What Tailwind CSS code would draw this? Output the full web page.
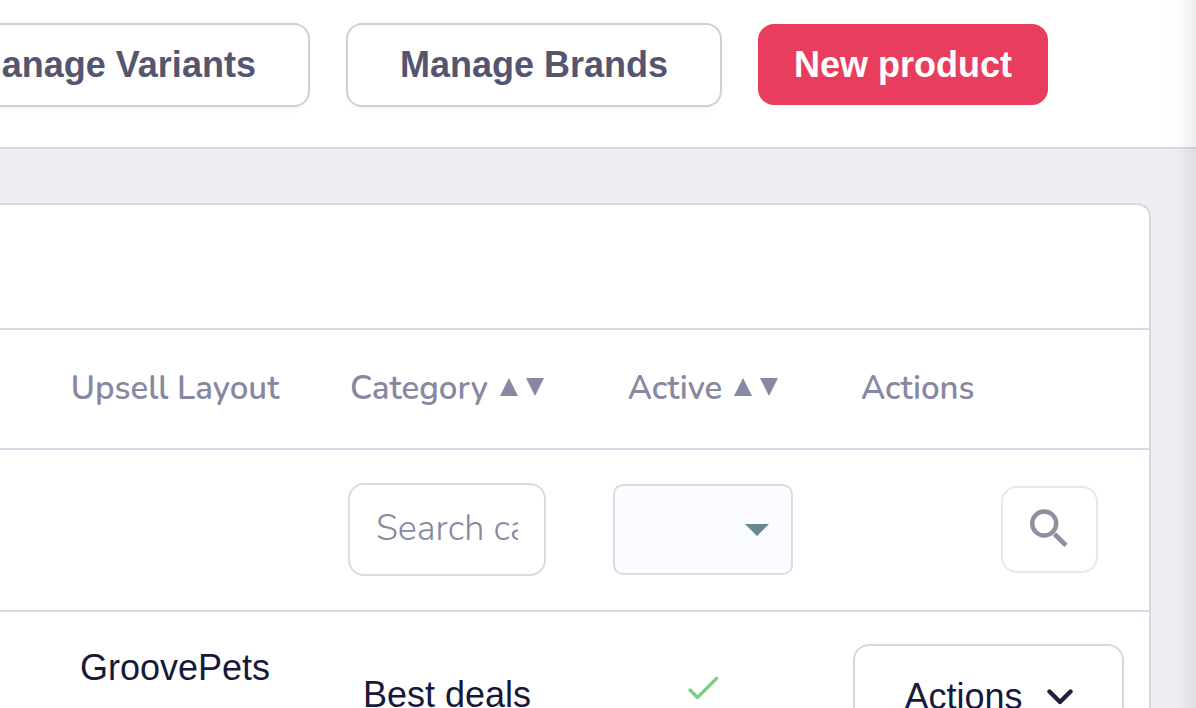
<!DOCTYPE html>
<html lang="en">
<head>
<meta charset="utf-8">
<title>Products</title>
<script src="https://cdn.jsdelivr.net/npm/@tailwindcss/browser@4"></script>
</head>
<body class="relative h-screen overflow-hidden bg-[#efeef5] font-['Liberation_Sans',Arial,sans-serif] text-[36px] leading-[40px] text-[#17193b]">
  <header class="flex items-start justify-end gap-9 overflow-hidden border-b-2 border-[#dadae2] bg-white pt-[23px] pr-[148px] pb-10 font-bold whitespace-nowrap text-[#555570]">
    <button type="button" class="h-[84px] shrink-0 rounded-2xl border-2 border-[#cfcfdb] bg-white px-[52px] shadow-md shadow-black/3">Manage Variants</button>
    <button type="button" class="h-[84px] shrink-0 rounded-2xl border-2 border-[#cfcfdb] bg-white px-[52px] shadow-md shadow-black/3">Manage Brands</button>
    <button type="button" class="mt-px h-[81px] shrink-0 rounded-2xl bg-[#e93d5d] px-9 text-white">New product</button>
  </header>

  <main class="pt-[54px] pr-[45px]">
    <section class="rounded-tr-[14px] border-t-2 border-r-2 border-[#d7d7e3] bg-white pt-[123px]">
      <table class="w-full table-fixed border-collapse">
        <colgroup>
          <col>
          <col class="w-[272px]">
          <col class="w-[240px]">
          <col class="w-[326px]">
        </colgroup>
        <thead class="font-['Nunito','Lato',sans-serif] text-[33px] whitespace-nowrap text-[#8788a2]">
          <tr class="h-[120px] border-y-2 border-[#d7d7e7]">
            <th scope="col" class="pl-[39px] text-center font-semibold">Upsell Layout</th>
            <th scope="col" class="font-semibold">
              <div class="flex items-center justify-center gap-3">Category
                <span class="flex gap-2 pb-1">
                  <button type="button" aria-label="Sort category ascending"><svg class="size-[18px]" viewBox="0 0 18 18" fill="currentColor"><path d="M9 0 18 18H0Z"/></svg></button>
                  <button type="button" aria-label="Sort category descending"><svg class="size-[18px]" viewBox="0 0 18 18" fill="currentColor"><path d="M0 0H18L9 18Z"/></svg></button>
                </span>
              </div>
            </th>
            <th scope="col" class="font-semibold">
              <div class="flex items-center justify-center gap-3">Active
                <span class="flex gap-2 pb-1">
                  <button type="button" aria-label="Sort active ascending"><svg class="size-[18px]" viewBox="0 0 18 18" fill="currentColor"><path d="M9 0 18 18H0Z"/></svg></button>
                  <button type="button" aria-label="Sort active descending"><svg class="size-[18px]" viewBox="0 0 18 18" fill="currentColor"><path d="M0 0H18L9 18Z"/></svg></button>
                </span>
              </div>
            </th>
            <th scope="col" class="pl-[38px] text-left font-semibold">Actions</th>
          </tr>
        </thead>
        <tbody>
          <tr class="h-[162px] border-b-2 border-[#d7d7e7]">
            <td></td>
            <td class="pb-0.5 text-center">
              <input type="text" aria-label="Search category" placeholder="Search category" class="mx-auto block h-[93px] w-[198px] rounded-2xl border-2 border-[#dadae7] bg-white px-[26px] pb-0.5 font-['Nunito','Lato',sans-serif] text-[36px] font-[350] placeholder:text-[#8788a2]">
            </td>
            <td class="pb-0.5">
              <div class="relative mx-auto h-[91px] w-[180px]">
                <select aria-label="Filter by active" class="h-full w-full appearance-none rounded-[10px] border-2 border-[#dadbe3] bg-[#fafcff]"><option></option><option>Yes</option><option>No</option></select>
                <svg class="pointer-events-none absolute top-10 right-6 h-3 w-6" viewBox="0 0 24 12" fill="#6b868e"><path d="M0 0H24L12 12Z"/></svg>
              </div>
            </td>
            <td class="pr-[51px] pb-0.5">
              <button type="button" aria-label="Search" class="ml-auto flex h-[87px] w-[97px] items-center justify-center rounded-2xl border-2 border-[#e7e7ec] bg-white pr-0.5 pb-0.5">
                <svg class="size-[38px]" viewBox="0 0 38 38" fill="none" stroke="#8f8fa1"><circle cx="14.2" cy="14.5" r="12" stroke-width="4.4"/><path d="M24.5 25 36 36.5" stroke-width="4.6"/></svg>
              </button>
            </td>
          </tr>
          <tr class="h-[200px] align-top">
            <td class="pt-9 pl-[39px] text-center">GroovePets</td>
            <td class="pt-[63px] text-center">Best deals</td>
            <td class="pt-16"><svg role="img" aria-label="Active" class="mx-auto h-6 w-[30px]" viewBox="0 0 30 24" fill="none" stroke="#7bcc84" stroke-width="3.2" stroke-linecap="round" stroke-linejoin="round"><path d="M2 14 9.5 21.5 28.5 2.5"/></svg></td>
            <td class="pt-8 pl-[30px]">
              <button type="button" class="flex h-[106px] w-[271px] items-center justify-center gap-6 rounded-2xl border-2 border-[#d7d7e3] bg-white">Actions
                <svg class="h-4 w-[26px]" viewBox="0 0 26 16" fill="none" stroke="#201d3e" stroke-width="4.4" stroke-linecap="round" stroke-linejoin="round"><path d="M2.5 2.5 13 13 23.5 2.5"/></svg>
              </button>
            </td>
          </tr>
        </tbody>
      </table>
    </section>
  </main>
  <div class="pointer-events-none absolute inset-y-0 right-0 w-9 bg-linear-to-r from-transparent via-black/1 to-black/7"></div>
</body>
</html>
